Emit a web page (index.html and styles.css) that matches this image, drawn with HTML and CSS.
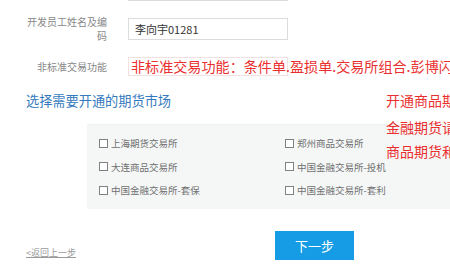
FILE: index.html
```html
<!DOCTYPE html>
<html lang="zh-CN">
  <head>
    <meta charset="UTF-8" />
    <meta name="viewport" content="width=device-width, initial-scale=1.0" />
    <title>期货开户 - 选择市场</title>
    <link rel="stylesheet" href="styles.css">
  </head>
  <body>
    <div class="page">
      <div class="form">
        <div class="row row-prev">
          <div class="label"></div>
          <input class="text-input" type="text" value="" />
        </div>

        <div class="row">
          <div class="label">开发员工姓名及编码</div>
          <input class="text-input" type="text" value="李向宇01281" />
        </div>

        <div class="row row-func">
          <div class="label">非标准交易功能</div>
          <div class="func-box">非标准交易功能：条件单.盈损单.交易所组合.彭博闪电</div>
        </div>
      </div>

      <div class="market">
        <h2 class="market-title">选择需要开通的期货市场</h2>

        <div class="notes">
          <p class="note note-first">开通商品期货交易所</p>
          <p class="note">金融期货请联系客户经理</p>
          <p class="note">商品期货和金融期货可同时开通</p>
        </div>

        <div class="market-panel">
          <label class="check"><span class="box"></span>上海期货交易所</label>
          <label class="check"><span class="box"></span>郑州商品交易所</label>
          <label class="check"><span class="box"></span>大连商品交易所</label>
          <label class="check"><span class="box"></span>中国金融交易所-投机</label>
          <label class="check"><span class="box"></span>中国金融交易所-套保</label>
          <label class="check"><span class="box"></span>中国金融交易所-套利</label>
        </div>
      </div>

      <div class="footer">
        <a class="back-link" href="#">&lt;返回上一步</a>
        <button class="next-btn">下一步</button>
      </div>
    </div>
  </body>
</html>
```

FILE: styles.css
```css
body {
  margin: 0;
  padding: 0;
  background-color: #ffffff;
  font-family: "Noto Sans CJK SC", "Noto Sans", sans-serif;
  overflow: hidden;
}

.page {
  position: relative;
  width: 450px;
  height: 277px;
  overflow: hidden;
}

/* Form rows */
.row {
  display: flex;
  align-items: center;
  margin-top: 14px;
}

.row-prev {
  margin-top: -21px;
}

.row-func {
  margin-top: 14px;
}

.label {
  width: 80px;
  margin-left: 27px;
  margin-right: 21px;
  text-align: right;
  font-size: 10px;
  line-height: 14px;
  color: #888888;
}

.text-input {
  box-sizing: border-box;
  width: 160px;
  height: 22px;
  margin: 0;
  padding: 0 6px;
  border: 1px solid #dcdcdc;
  font-family: "Noto Sans CJK SC", sans-serif;
  font-size: 11px;
  color: #333333;
  outline: none;
}

.func-box {
  box-sizing: border-box;
  width: 160px;
  height: 19px;
  padding-left: 2px;
  border: 1px solid #f1e1e1;
  font-size: 14.1px;
  line-height: 17px;
  color: #ea2f2f;
  white-space: nowrap;
}

/* Market section */
.market-title {
  margin: 15px 0 0 26px;
  font-size: 13.2px;
  font-weight: normal;
  line-height: 20px;
  color: #3479bd;
}

.notes {
  position: absolute;
  left: 386px;
  top: 88px;
  white-space: nowrap;
}

.note {
  margin: 0;
  font-size: 14px;
  line-height: 24px;
  color: #ea2f2f;
}

.note-first {
  margin-bottom: 3px;
}

.market-panel {
  display: grid;
  grid-template-columns: 186px 186px;
  margin: 12.5px 0 0 87px;
  padding: 7px 0 7px 12px;
  background-color: #f5f7f7;
  border-top: 1px solid #edf1f1;
}

.check {
  display: flex;
  align-items: center;
  height: 23.5px;
  font-size: 9.5px;
  color: #707070;
  white-space: nowrap;
}

.box {
  box-sizing: border-box;
  width: 9px;
  height: 9px;
  margin-right: 3px;
  border: 1px solid #808080;
  background-color: #ffffff;
}

/* Footer */
.footer {
  display: grid;
  grid-template-columns: 249px 79px;
  align-items: end;
  margin-top: 22px;
  padding-left: 26px;
}

.back-link {
  justify-self: start;
  font-size: 9px;
  line-height: 12px;
  color: #9a9a9a;
  text-decoration: underline;
  padding-bottom: 1px;
}

.next-btn {
  height: 29px;
  border: none;
  padding: 0;
  background-color: #159ce4;
  color: #ffffff;
  font-family: "Noto Sans CJK SC", sans-serif;
  font-size: 13px;
  cursor: pointer;
}
```
